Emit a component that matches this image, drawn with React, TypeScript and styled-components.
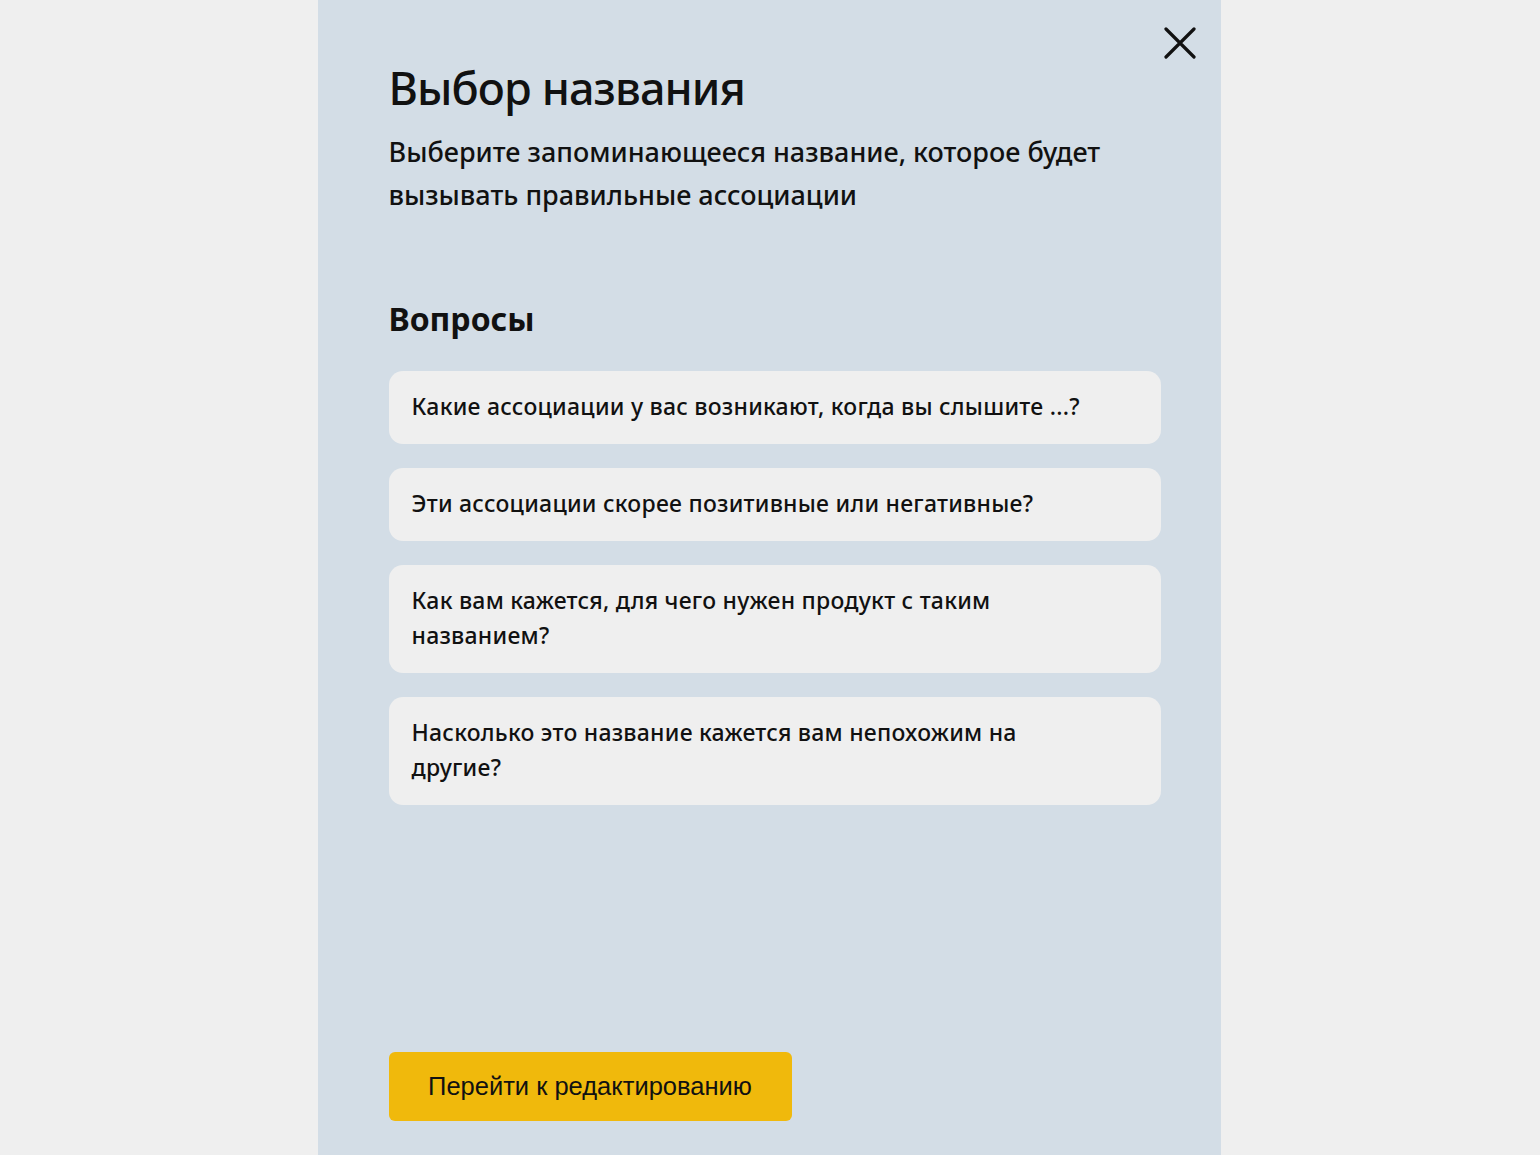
import React from "react";
import styled, { createGlobalStyle } from "styled-components";

const GlobalStyle = createGlobalStyle`
  html, body {
    margin: 0;
    padding: 0;
    background: #efefef;
  }
  body {
    font-family: "Noto Sans", "Open Sans", sans-serif;
    color: #111;
  }
`;

const Page = styled.div`
  display: flex;
  justify-content: center;
  min-height: 1155px;
  padding-right: 2px;
`;

const Panel = styled.div`
  position: relative;
  width: 903px;
  box-sizing: border-box;
  min-height: 1155px;
  padding: 58px 60px 34px 71px;
  background: #d3dde6;
  display: flex;
  flex-direction: column;
`;

const CloseButton = styled.button`
  position: absolute;
  top: 26px;
  right: 24px;
  width: 34px;
  height: 34px;
  padding: 0;
  border: none;
  background: transparent;
  cursor: pointer;
  display: flex;
  align-items: center;
  justify-content: center;
`;

const Title = styled.h1`
  margin: 0;
  font-size: 45px;
  font-weight: 500;
  line-height: 60px;
  letter-spacing: -0.9px;
`;

const Lead = styled.p`
  margin: 12px 0 0;
  font-size: 27px;
  font-weight: 500;
  line-height: 43px;
  max-width: 760px;
`;

const SectionTitle = styled.h2`
  margin: 81px 0 0;
  font-size: 32px;
  font-weight: 700;
  line-height: 44px;
`;

const Questions = styled.ul`
  list-style: none;
  margin: 30px 0 0;
  padding: 0;
  display: flex;
  flex-direction: column;
  gap: 24px;
  width: 772px;
`;

const Question = styled.li`
  background: #efefef;
  border-radius: 14px;
  padding: 18px 50px 20px 23px;
  font-size: 23px;
  font-weight: 500;
  line-height: 35px;
  letter-spacing: 0.25px;
`;

const Footer = styled.div`
  margin-top: auto;
`;

const PrimaryButton = styled.button`
  width: 403px;
  height: 69px;
  border: none;
  border-radius: 6px;
  background: #f0b90c;
  color: #111;
  font-family: "Liberation Sans", Arial, sans-serif;
  font-size: 25.5px;
  cursor: pointer;
`;

const questions = [
  "Какие ассоциации у вас возникают, когда вы слышите ...?",
  "Эти ассоциации скорее позитивные или негативные?",
  "Как вам кажется, для чего нужен продукт с таким названием?",
  "Насколько это название кажется вам непохожим на другие?",
];

export default function App() {
  return (
    <>
      <GlobalStyle />
      <Page>
        <Panel>
          <CloseButton aria-label="Закрыть">
            <svg width="32" height="32" viewBox="0 0 32 32">
              <path
                d="M2 2 L30 30 M30 2 L2 30"
                stroke="#111"
                strokeWidth="3.2"
                strokeLinecap="round"
              />
            </svg>
          </CloseButton>
          <Title>Выбор названия</Title>
          <Lead>
            Выберите запоминающееся название, которое будет вызывать правильные
            ассоциации
          </Lead>
          <SectionTitle>Вопросы</SectionTitle>
          <Questions>
            {questions.map((q) => (
              <Question key={q}>{q}</Question>
            ))}
          </Questions>
          <Footer>
            <PrimaryButton>Перейти к редактированию</PrimaryButton>
          </Footer>
        </Panel>
      </Page>
    </>
  );
}
